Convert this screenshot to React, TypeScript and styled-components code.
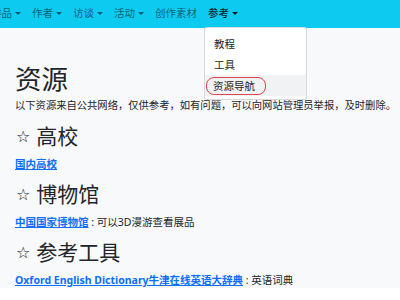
import styled, { createGlobalStyle } from "styled-components";

const GlobalStyle = createGlobalStyle`
  html, body {
    margin: 0;
    padding: 0;
    background: #ffffff;
    font-family: "Noto Sans", "Noto Sans CJK SC", sans-serif;
    color: #212529;
    overflow: hidden;
  }
`;

const navItems = [
  { label: "作品", caret: true },
  { label: "作者", caret: true },
  { label: "访谈", caret: true },
  { label: "活动", caret: true },
  { label: "创作素材", caret: false },
];

const Page = styled.div`
  width: 400px;
  height: 300px;
`;

const NavBar = styled.nav`
  height: 28px;
  background: #0dcaf0;
  display: flex;
  align-items: center;
  padding-bottom: 2px;
  box-sizing: border-box;
`;

const NavList = styled.ul`
  display: flex;
  gap: 11px;
  list-style: none;
  margin: 0 0 0 -9px;
  padding: 0;
`;

const NavItem = styled.li<{ $active?: boolean }>`
  position: relative;
  display: flex;
  align-items: center;
  font-size: 10.5px;
  line-height: 14px;
  color: ${(p) => (p.$active ? "rgba(0,0,0,0.85)" : "rgba(0,0,0,0.55)")};
  font-weight: ${(p) => (p.$active ? 500 : 400)};
`;

const Caret = styled.span`
  margin-left: 3px;
  width: 0;
  height: 0;
  border-left: 3px solid transparent;
  border-right: 3px solid transparent;
  border-top: 3.5px solid currentColor;
`;

const Menu = styled.div`
  position: absolute;
  top: 21px;
  left: -4px;
  width: 101px;
  padding: 5px 0 3px;
  background: #ffffff;
  border: 1px solid rgba(0, 0, 0, 0.15);
  border-radius: 3px;
  z-index: 10;
`;

const MenuItem = styled.div<{ $focus?: boolean }>`
  height: 21px;
  padding-left: 9px;
  display: flex;
  align-items: center;
  font-size: 10.5px;
  font-weight: 400;
  color: #212529;
  background: ${(p) => (p.$focus ? "#f1f2f3" : "transparent")};
`;

const Circled = styled.span`
  margin-left: -8px;
  padding: 1px 10px 1px 6px;
  border: 1px solid #e0454d;
  border-radius: 8px;
`;

const Content = styled.main`
  background: #f8f9fa;
  padding: 35px 15px 0;
`;

const Title = styled.h1`
  margin: 0 0 2px;
  font-size: 26.5px;
  line-height: 32px;
  font-weight: 400;
`;

const Text = styled.p`
  margin: 0 0 11px;
  font-size: 10.3px;
  line-height: 16px;
  white-space: nowrap;
`;

const Section = styled.h2`
  margin: 0 0 7px;
  font-size: 21px;
  line-height: 25px;
  font-weight: 400;
  display: flex;
  align-items: center;
  gap: 6px;
`;

const Star = styled.span`
  font-family: "DejaVu Sans", sans-serif;
  font-size: 16px;
  margin-left: 1px;
`;

const Line = styled.p`
  margin: 0 0 10px;
  font-size: 10.5px;
  line-height: 16px;
  white-space: nowrap;
  &:last-child {
    margin-bottom: 0;
  }
`;

const Link = styled.a`
  color: #0d6efd;
  font-weight: 700;
  text-decoration: underline;
`;

export default function App() {
  return (
    <Page>
      <GlobalStyle />
      <NavBar>
        <NavList>
          {navItems.map((item) => (
            <NavItem key={item.label}>
              {item.label}
              {item.caret && <Caret />}
            </NavItem>
          ))}
          <NavItem $active>
            参考
            <Caret />
            <Menu>
              <MenuItem>教程</MenuItem>
              <MenuItem>工具</MenuItem>
              <MenuItem $focus>
                <Circled>资源导航</Circled>
              </MenuItem>
            </Menu>
          </NavItem>
        </NavList>
      </NavBar>
      <Content>
        <Title>资源</Title>
        <Text>以下资源来自公共网络，仅供参考，如有问题，可以向网站管理员举报，及时删除。</Text>
        <Section>
          <Star>☆</Star>高校
        </Section>
        <Line>
          <Link href="#">国内高校</Link>
        </Line>
        <Section>
          <Star>☆</Star>博物馆
        </Section>
        <Line>
          <Link href="#">中国国家博物馆</Link> : 可以3D漫游查看展品
        </Line>
        <Section>
          <Star>☆</Star>参考工具
        </Section>
        <Line>
          <Link href="#">Oxford English Dictionary牛津在线英语大辞典</Link> : 英语词典
        </Line>
      </Content>
    </Page>
  );
}
